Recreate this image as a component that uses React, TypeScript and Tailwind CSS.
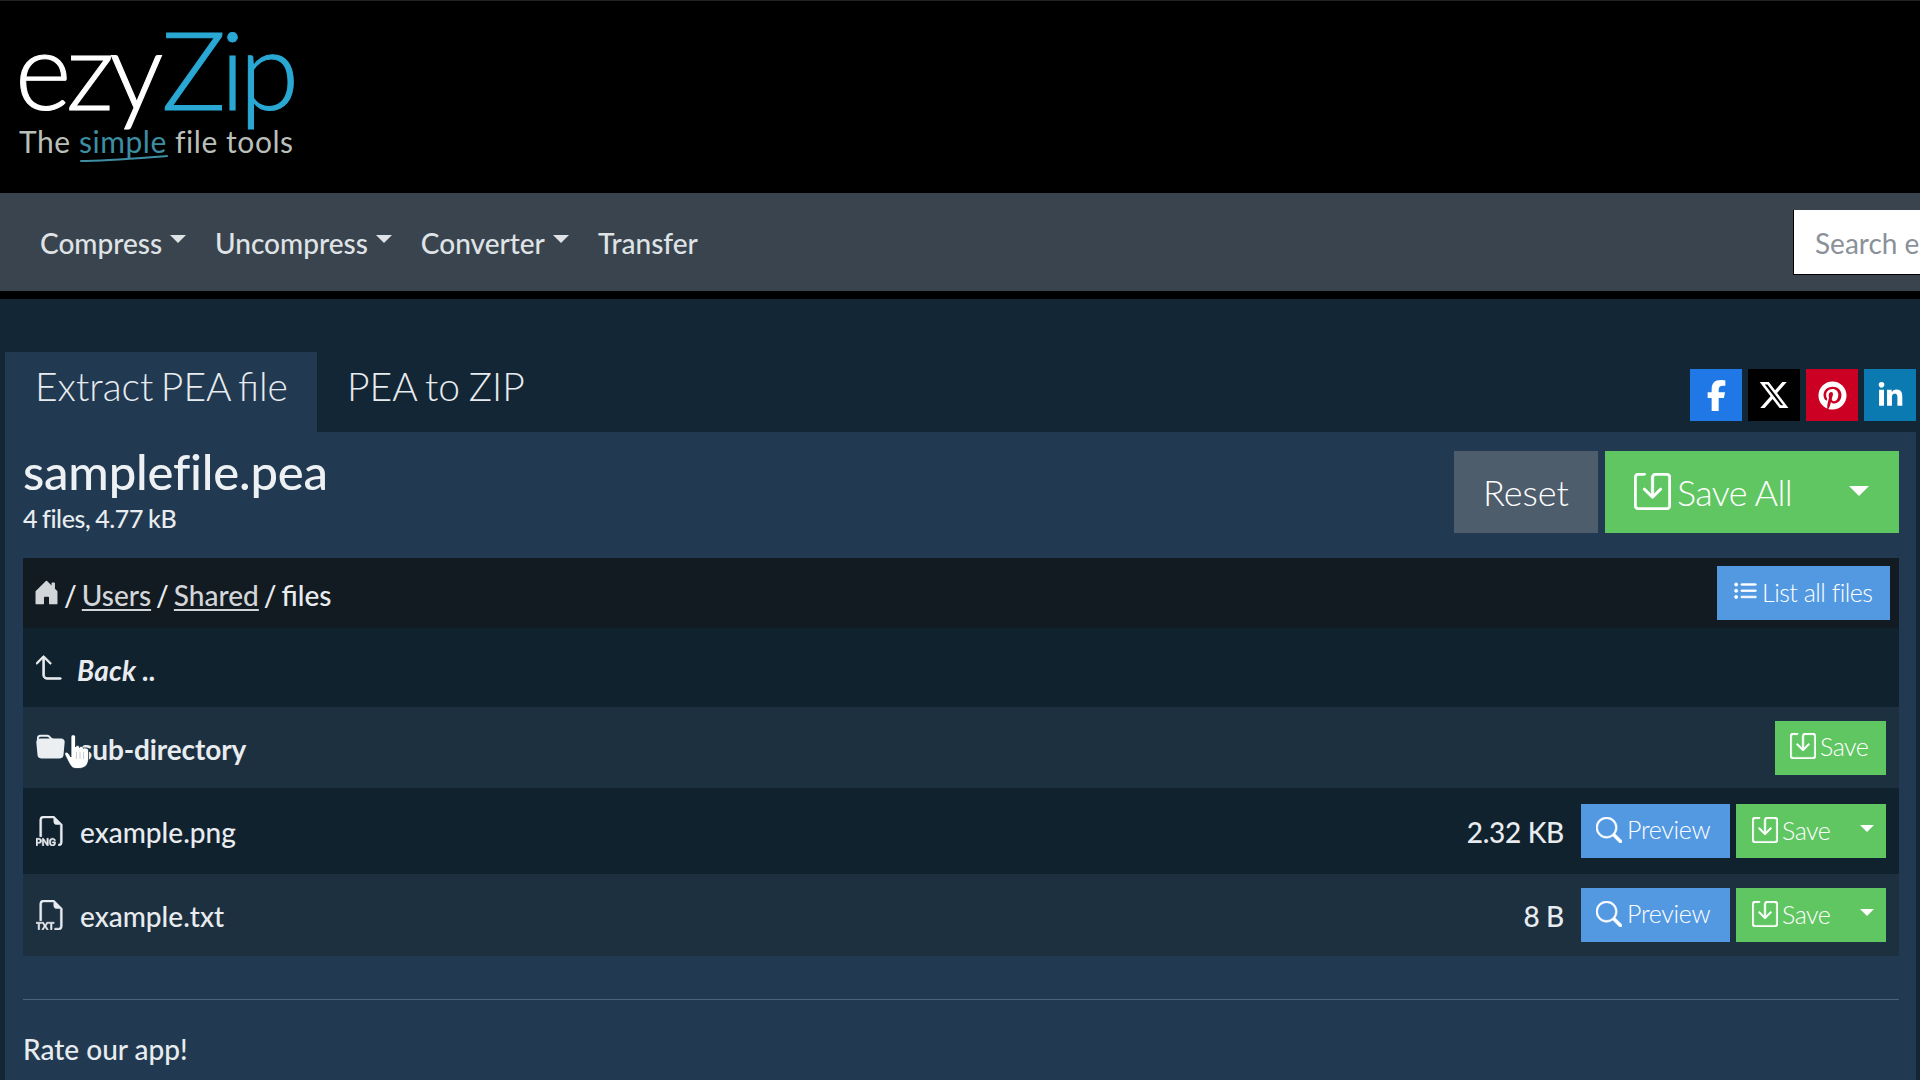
import { BsArrow90DegUp, BsFiletypePng, BsFiletypeTxt, BsFolderFill, BsHouseDoorFill, BsListUl, BsSave, BsSearch } from "react-icons/bs";
import { FaFacebookF, FaLinkedinIn, FaPinterest, FaXTwitter } from "react-icons/fa6";

function Caret({ className }: { className: string }) {
  return <span className={`inline-block border-x-transparent border-t-current border-b-0 border-solid ${className}`} />;
}

function NavItem({ label, caret = true }: { label: string; caret?: boolean }) {
  return (
    <div className="flex items-center text-[28px] font-medium text-[#dfe3e6] pt-[1px]">
      <span>{label}</span>
      {caret && <Caret className="ml-[8px] mb-[7px] border-x-[8px] border-t-[8px]" />}
    </div>
  );
}

function SaveSplit() {
  return (
    <div className="flex items-center w-[150px] h-[54px] bg-[#5fc662] text-white text-[25px] font-light pl-[16px] pr-[12px] tracking-[-0.5px]">
      <BsSave className="text-[26px] mr-[4px] mb-[3px] stroke-[0.35px]" />
      <span className="mb-[1px]">Save</span>
      <Caret className="ml-auto mb-[5px] border-x-[7px] border-t-[7px]" />
    </div>
  );
}

function Preview() {
  return (
    <div className="flex items-center w-[149px] h-[54px] bg-[#5299e2] text-white text-[25px] font-light pl-[15px] tracking-[-0.3px]">
      <BsSearch className="text-[26px] mr-[5px] mb-[3px] stroke-[0.35px]" />
      <span className="mb-[2px]">Preview</span>
    </div>
  );
}

function FileRow({ name, size, icon, bg, h }: { name: string; size: string; icon: React.ReactNode; bg: string; h: string }) {
  return (
    <div className={`flex items-center ${bg} ${h} pl-[13px] pr-[13px] text-[28px] font-medium text-[#e8ecef]`}>
      <span className="w-[44px] text-[30px] shrink-0 flex">{icon}</span>
      <span className="pt-[2px]">{name}</span>
      <span className="ml-auto mr-[17px] pt-[2px] tracking-[-0.3px]">{size}</span>
      <div className="flex gap-[6px]">
        <Preview />
        <SaveSplit />
      </div>
    </div>
  );
}

function Social({ bg, size, children }: { bg: string; size: string; children: React.ReactNode }) {
  return <div className={`flex items-center justify-center w-[52px] h-[52px] text-white ${size} ${bg}`}>{children}</div>;
}

export default function App() {
  return (
    <div className="relative w-[1920px] h-[1080px] overflow-hidden bg-[#132635] font-['Lato','Liberation_Sans',sans-serif] text-[#e8ecef]">
      <header className="h-[193px] bg-black pl-[15px] pt-[11px] border-t border-[#222]">
        <div className="flex items-baseline text-[108px] leading-[112px] font-light tracking-[-5px] h-[112px] [-webkit-text-stroke:1px_currentColor]">
          <span className="text-white">ezy</span>
          <span className="text-[#2aa8d4] ml-[3px]">Zip</span>
        </div>
        <div className="relative w-fit ml-[4px] text-[30px] leading-[34px] font-normal text-[#b9bfb9] tracking-[0.55px]">
          The <span className="text-[#3d8ea3]">simple</span> file tools
          <svg className="absolute left-[61px] top-[31px] w-[88px] h-[8px]" viewBox="0 0 88 8" fill="none">
            <path d="M1 6 C 25 6 60 3 87 1" stroke="#3d8ea3" strokeWidth="2" strokeLinecap="round" />
          </svg>
        </div>
      </header>

      <nav className="h-[98px] bg-[#3a444e] flex items-center pl-[40px] overflow-hidden">
        <div className="flex items-center gap-[29px]">
          <NavItem label="Compress" />
          <NavItem label="Uncompress" />
          <NavItem label="Converter" />
          <NavItem label="Transfer" caret={false} />
        </div>
        <input
          readOnly
          placeholder="Search ezyZip"
          className="ml-auto mr-[-300px] shrink-0 w-[427px] h-[65px] bg-white pl-[21px] pt-[2px] text-[28px] text-[#666] placeholder:text-[#8a9199] outline-none border-l border-b border-black"
        />
      </nav>
      <div className="h-[8px] bg-black" />

      <main className="pt-[53px] pl-[5px] pr-[4px]">
        <div className="flex h-[80px]">
          <div className="w-[312px] bg-[#223a51] pl-[30px] pt-[8px] text-[39px] leading-[52px] font-light [word-spacing:-3px] [font-feature-settings:'liga'_1]">Extract PEA file</div>
          <div className="pl-[30px] pt-[8px] text-[39px] leading-[52px] font-light [word-spacing:-2px]">PEA to ZIP</div>
          <div className="ml-auto mt-[17px] flex gap-[6px]">
            <Social bg="bg-[#1f78e6]" size="text-[31px]"><FaFacebookF /></Social>
            <Social bg="bg-black" size="text-[32px]"><FaXTwitter /></Social>
            <Social bg="bg-[#cc0022]" size="text-[29px]"><FaPinterest /></Social>
            <Social bg="bg-[#0a7ab0]" size="text-[27px]"><FaLinkedinIn /></Social>
          </div>
        </div>

        <section className="bg-[#223a51] h-[700px] pl-[18px] pr-[17px]">
          <div className="flex h-[126px] pt-[14px]">
            <div>
              <h1 className="text-[49px] leading-[50px] font-medium text-[#eef1f3] tracking-[-0.2px]">samplefile.pea</h1>
              <p className="mt-[7px] text-[25px] leading-[31px] font-medium tracking-[-0.4px] [word-spacing:-1px]">4 files, 4.77 kB</p>
            </div>
            <div className="ml-auto flex gap-[7px] h-[82px] mt-[5px]">
              <div className="flex items-center justify-center w-[144px] bg-[#4e5d6c] text-[36px] font-light text-white">Reset</div>
              <div className="flex items-center w-[294px] bg-[#5fc662] text-[36px] font-light text-white pl-[29px] pr-[30px]">
                <BsSave className="text-[37px] mr-[6px] mb-[2px] stroke-[0.35px]" />
                <span className="tracking-[-0.7px]">Save All</span>
                <Caret className="ml-auto mb-[2px] border-x-[10px] border-t-[10px]" />
              </div>
            </div>
          </div>

          <div>
            <div className="flex items-center h-[70px] bg-[#131b22] pl-[10px] pr-[9px] text-[28px] font-medium">
              <BsHouseDoorFill className="text-[27px] text-[#d3d6d9] mr-[4px] mt-[-1px]" />
              <span className="flex gap-[5px] pt-[4px]">
                <span>/</span>
                <span className="underline underline-offset-[3px] text-[#d3d6d9]">Users</span>
                <span>/</span>
                <span className="underline underline-offset-[3px] text-[#d3d6d9]">Shared</span>
                <span>/</span>
                <span>files</span>
              </span>
              <div className="ml-auto flex items-center w-[173px] h-[54px] bg-[#5299e2] text-white text-[25px] font-light pl-[16px] tracking-[-0.5px]">
                <BsListUl className="text-[25px] mr-[4px] mb-[3px] stroke-[0.5px]" />
                <span>List all files</span>
              </div>
            </div>
            <div className="flex items-center h-[79px] bg-[#11222f] pl-[13px] text-[28px] italic font-bold">
              <BsArrow90DegUp className="text-[27px] mr-[14px] stroke-[0.5px]" />
              <span className="pt-[5px] tracking-[0.2px]">Back ..</span>
            </div>
            <div className="flex items-center h-[81px] bg-[#1d3040] pl-[13px] pr-[13px] text-[28px] font-bold">
              <BsFolderFill className="text-[29px] text-[#eceff1] mr-[15px]" />
              <span className="pt-[2px] tracking-[-0.1px]">sub-directory</span>
              <div className="ml-auto flex items-center w-[111px] h-[54px] bg-[#5fc662] text-white text-[25px] font-light pl-[15px] tracking-[-0.5px]">
                <BsSave className="text-[26px] mr-[4px] mb-[3px] stroke-[0.35px]" />
                <span className="mb-[1px]">Save</span>
              </div>
            </div>
            <FileRow name="example.png" size="2.32 KB" icon={<BsFiletypePng className="stroke-[0.3px]" />} bg="bg-[#11222f]" h="h-[86px]" />
            <FileRow name="example.txt" size="8 B" icon={<BsFiletypeTxt className="stroke-[0.3px]" />} bg="bg-[#1d3040]" h="h-[82px]" />
          </div>

          <hr className="mt-[43px] border-0 border-t border-[#4e6378]" />
          <p className="mt-[32px] text-[28px] leading-[34px] font-medium text-[#e8ecef]">Rate our app!</p>
        </section>
      </main>

      <svg className="absolute left-[64px] top-[734px] w-[26px] h-[35px]" viewBox="0 0 26 35">
        <path d="M7 3 C7 0 11.500 0 11.500 3 V13 C12 11 15.500 11 15.500 13.500 C16 12 19.500 12 19.500 14.500 C20 13.500 24.500 13.500 24.500 16.500 V25 C24.500 31 20.500 34.500 15 34.500 H12 C8 34.500 6 31 4 27 L1 21 C0 18 3 17 5 20 L7 23 Z" fill="#fff" stroke="#10202c" strokeWidth="0.7" />
        <path d="M12.500 18 V25 M16 18 V25 M19.500 18 V25" stroke="#b0b6bb" strokeWidth="0.7" />
      </svg>
    </div>
  );
}
